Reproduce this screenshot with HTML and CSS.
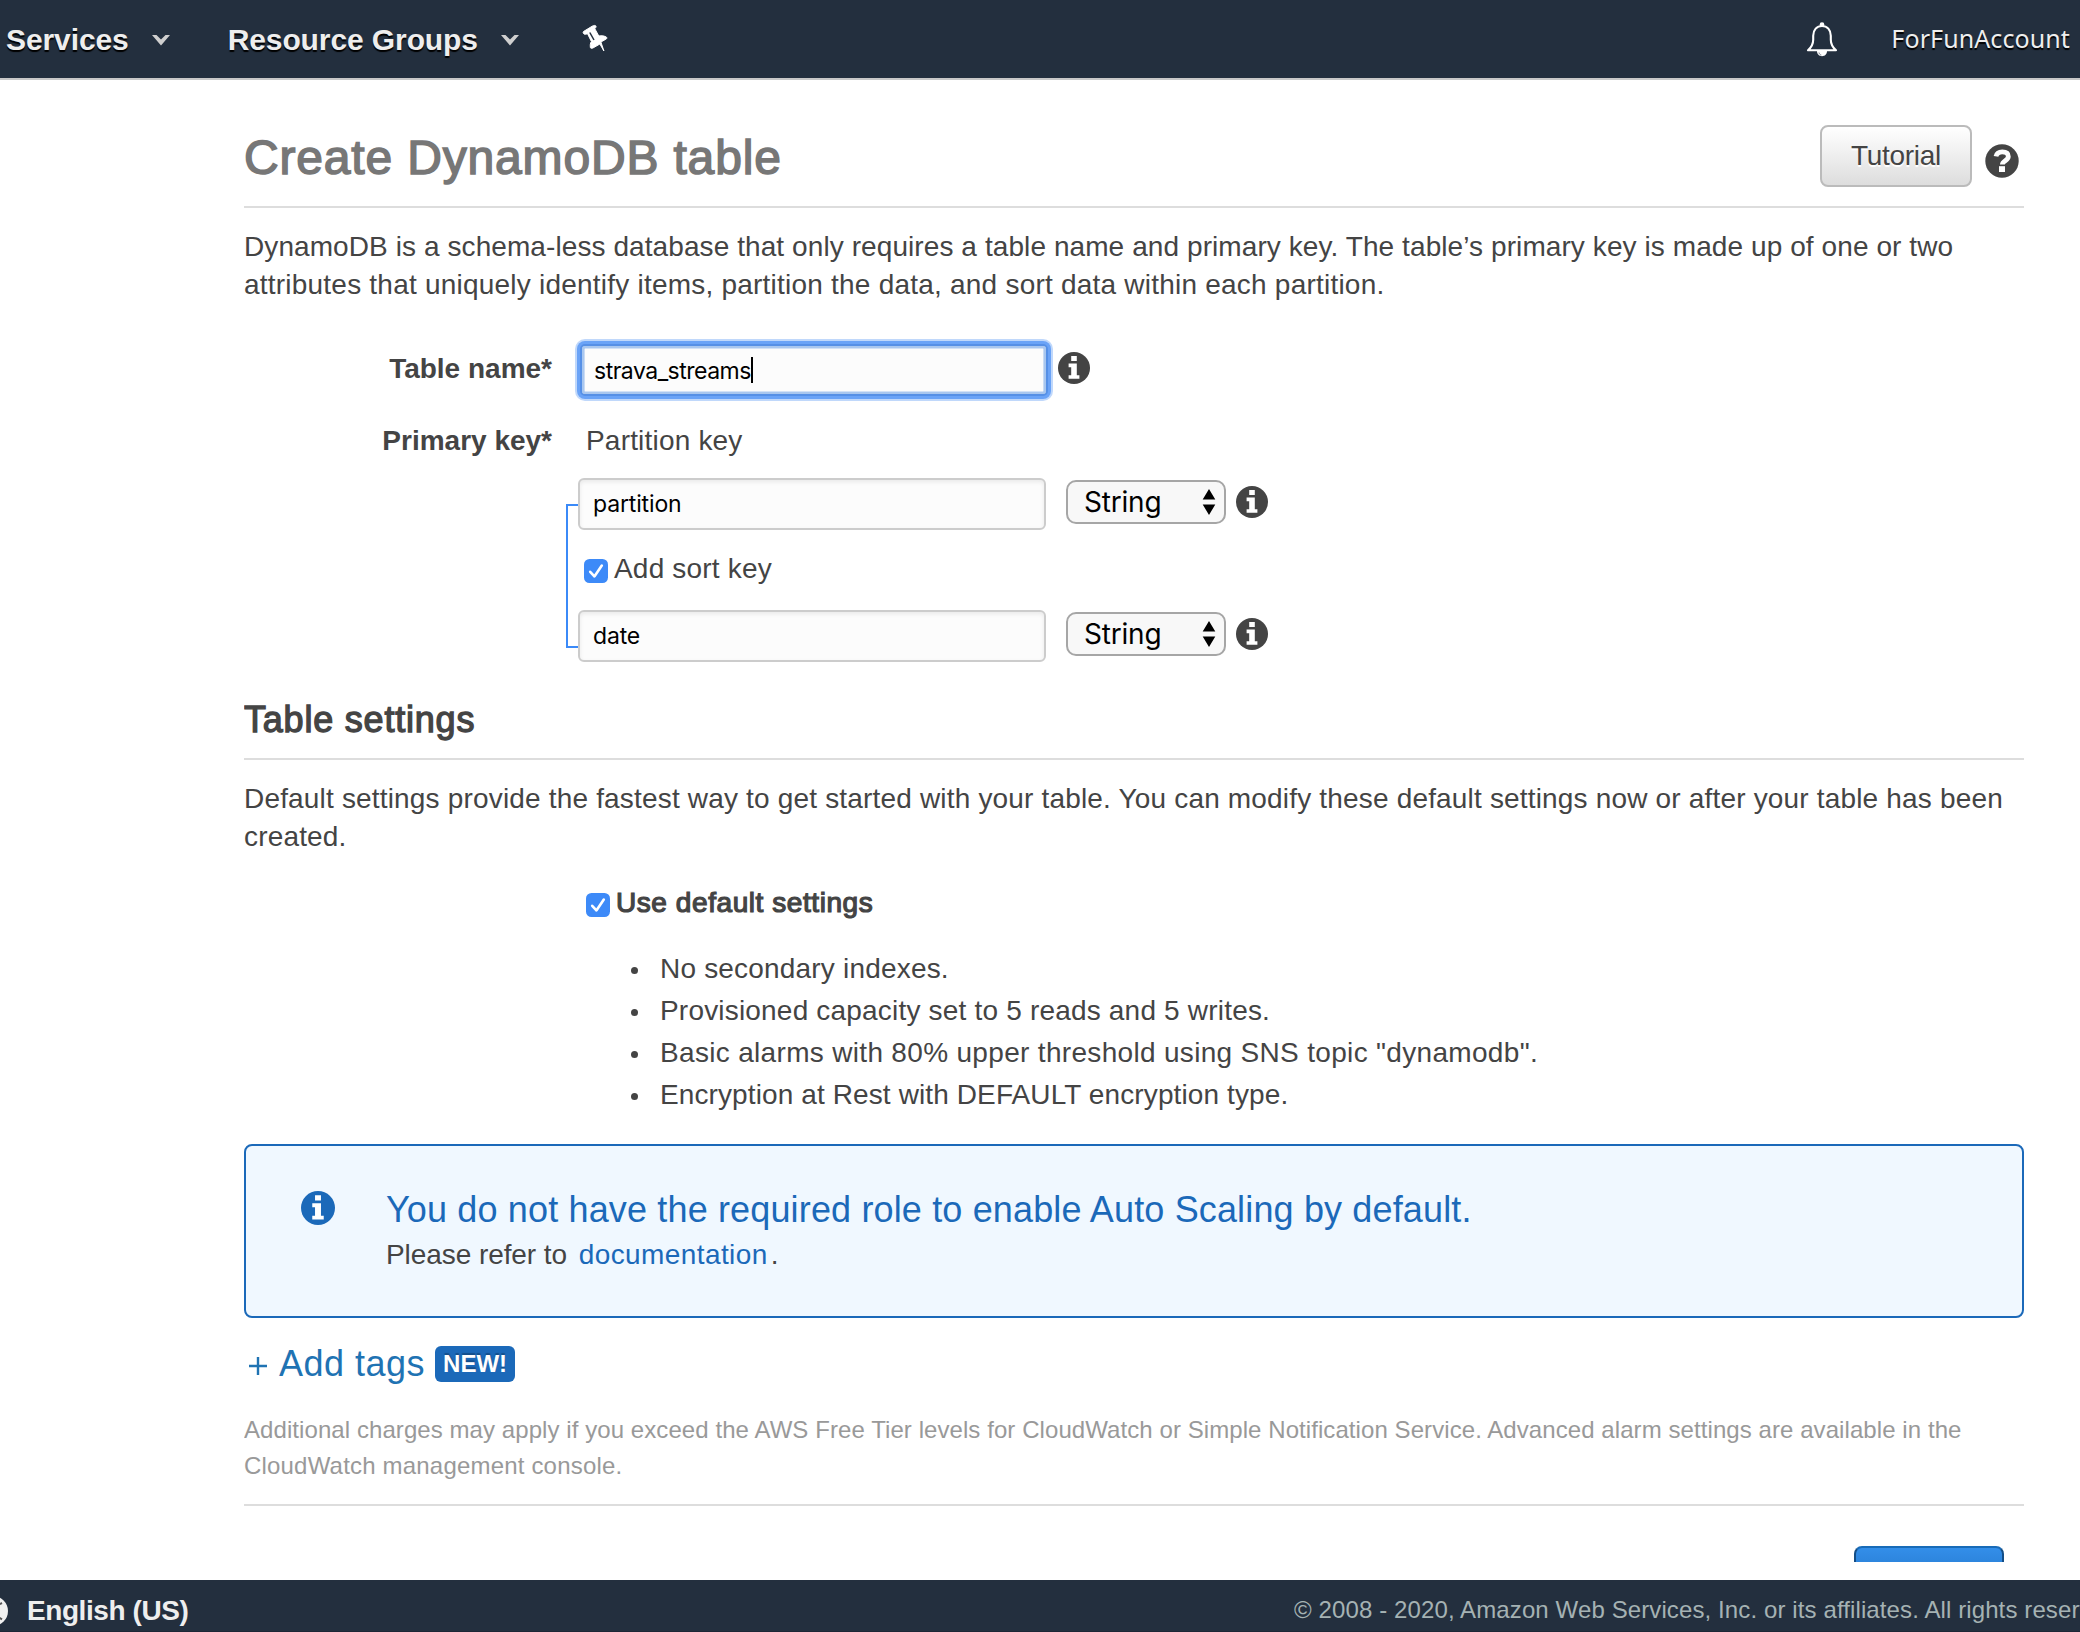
FILE: index.html
```html
<!DOCTYPE html>
<html lang="en">
<head>
<meta charset="utf-8">
<title>Create DynamoDB table</title>
<link rel="stylesheet" href="styles.css">
</head>
<body>
<svg class="defs" width="0" height="0" aria-hidden="true">
  <symbol id="info" viewBox="0 0 32 32">
    <circle cx="16" cy="16" r="16" fill="currentColor"/>
    <path fill="#fff" d="M13.2 4h5.6v5h-5.6zM10.6 11.6h8.2v11.6h2.6v3.6H10.6v-3.6h2.6v-8h-2.6z"/>
  </symbol>
  <symbol id="check" viewBox="0 0 24 24">
    <rect width="24" height="24" rx="5.5" fill="#3d8af8"/>
    <path d="M6.2 12.8l4.2 4.6L17.8 6.6" fill="none" stroke="#fff" stroke-width="2.6" stroke-linecap="round" stroke-linejoin="round"/>
  </symbol>
  <symbol id="caret" viewBox="0 0 18 11">
    <path d="M0 0h4.500L9 4.600 13.500 0H18L9 10.600z" fill="#cfcfcf"/>
  </symbol>
  <symbol id="updown" viewBox="0 0 14 28">
    <path d="M7 1l6.300 10.500H.7zM7 27L.7 16.500h12.600z" fill="#000"/>
  </symbol>
</svg>

<header class="topbar">
  <nav class="topnav">
    <a class="nav-item">Services</a>
    <svg class="caret" width="18" height="11"><use href="#caret"/></svg>
    <a class="nav-item nav-groups">Resource Groups</a>
    <svg class="caret" width="18" height="11"><use href="#caret"/></svg>
    <svg class="pin" width="26" height="29" viewBox="0 0 26 29">
      <path fill="#fff" stroke="#fff" stroke-width="1" stroke-linejoin="round" d="M1.500 7.500L10.500 2c1.500-.8 3.200-.8 3.500.2.300 1-.5 1.700-1.200 2.500l4 7.300c2.700-.5 5.700-.2 7.700 1.200.8.700.3 1.600-.6 2l-5 2.800 3 9-4-7-7 4c-1 .5-2.300.5-2.500-.500-.3-2.300-.2-4.500 1-6L5.500 9.700c-1.300.5-2.700.8-3.500.3s-1.200-1.800-.5-2.500z"/>
      <path d="M7.800 8.500l4.200 7.500" stroke="#232f3e" stroke-width="1.500"/>
    </svg>
  </nav>
  <div class="account">
    <svg class="bell" width="32" height="35" viewBox="0 0 32 35">
      <circle cx="16" cy="2.600" r="2.300" fill="#fff"/>
      <path d="M2 28.300h28c-4-3.500-5.200-6.500-5.200-10.500v-4c0-6-3.600-9.800-8.800-9.800s-8.800 3.800-8.800 9.800v4c0 4-1.200 7-5.200 10.500z" fill="none" stroke="#fff" stroke-width="2.100" stroke-linejoin="round"/>
      <path d="M11 29h10c0 3.200-2.200 5.200-5 5.200s-5-2-5-5.200z" fill="#fff"/>
      <path d="M13 30.500c.3 1.500 1 2.200 2.300 2.500" stroke="#5a6470" stroke-width=".8" fill="none"/>
    </svg>
    <span class="account-name">ForFunAccount</span>
  </div>
</header>

<main class="page">
  <div class="page-head">
    <h1>Create DynamoDB table</h1>
    <div class="head-actions">
      <button class="btn">Tutorial</button>
      <svg class="help" width="34" height="34" viewBox="0 0 34 34">
        <circle cx="17" cy="17" r="16.700" fill="#444"/>
        <path d="M11 12.400c.6-3.200 2.700-4.600 6.300-4.600 3.800 0 6 1.700 6 4.600 0 4.300-5.900 4.200-5.900 8.200" fill="none" stroke="#fff" stroke-width="4.800"/>
        <rect x="14" y="22.200" width="6" height="5.800" fill="#fff"/>
      </svg>
    </div>
  </div>
  <p class="intro"><span class="intro-a">DynamoDB is a schema-less database that only requires a table name and primary key. The table’s primary key is made up of one or two</span><br><span class="intro-b">attributes that uniquely identify items, partition the data, and sort data within each partition.</span></p>

  <form class="form">
    <div class="row">
      <label class="label label-name">Table name*</label>
      <div class="field focused"><span class="value-name">strava_streams</span><i class="cursor"></i></div>
      <svg class="info name-info" width="32" height="32"><use href="#info"/></svg>
    </div>
    <div class="row key-row">
      <label class="label">Primary key*</label>
      <div class="keys">
        <div class="hint">Partition key</div>
        <div class="key-group">
          <div class="key">
            <div class="field">partition</div>
            <div class="select"><span>String</span><svg width="14" height="28"><use href="#updown"/></svg></div>
            <svg class="info" width="32" height="32"><use href="#info"/></svg>
          </div>
          <div class="check sort-check"><svg width="24" height="24"><use href="#check"/></svg><span>Add sort key</span></div>
          <div class="key">
            <div class="field">date</div>
            <div class="select"><span>String</span><svg width="14" height="28"><use href="#updown"/></svg></div>
            <svg class="info" width="32" height="32"><use href="#info"/></svg>
          </div>
        </div>
      </div>
    </div>
  </form>

  <h2>Table settings</h2>
  <p class="settings-text">Default settings provide the fastest way to get started with your table. You can modify these default settings now or after your table has been<br>created.</p>
  <div class="check default-check"><svg width="24" height="24"><use href="#check"/></svg><span class="medium">Use default settings</span></div>
  <ul class="defaults">
    <li>No secondary indexes.</li>
    <li>Provisioned capacity set to 5 reads and 5 writes.</li>
    <li class="alarms">Basic alarms with 80% upper threshold using SNS topic "dynamodb".</li>
    <li class="encryption">Encryption at Rest with DEFAULT encryption type.</li>
  </ul>

  <section class="alert">
    <svg class="alert-icon" width="34" height="34"><use href="#info"/></svg>
    <div>
      <div class="alert-title">You do not have the required role to enable Auto Scaling by default.</div>
      <div class="alert-text">Please refer to <a class="doc-link">documentation</a>.</div>
    </div>
  </section>

  <div class="tags"><svg class="plus" width="18" height="18" viewBox="0 0 18 18"><path d="M9 0v18M0 9h18" stroke="#1f73b3" stroke-width="2.400"/></svg><a>Add tags</a><span class="badge">NEW!</span></div>
  <p class="note"><span class="note-a">Additional charges may apply if you exceed the AWS Free Tier levels for CloudWatch or Simple Notification Service. Advanced alarm settings are available in the</span><br>CloudWatch management console.</p>
  <div class="actions"><span class="primary"></span></div>
</main>

<footer class="footer">
  <div class="language">
    <svg width="8" height="30" viewBox="0 0 8 30">
      <circle cx="-7" cy="15" r="15" fill="#f0f0f0"/>
      <path d="M-1 8.500l3-1.500M-1 21.500l3 1.800" stroke="#555" stroke-width="2"/>
    </svg>
    <span>English (US)</span>
  </div>
  <div class="copyright">© 2008 - 2020, Amazon Web Services, Inc. or its affiliates. All rights reserved.</div>
</footer>
</body>
</html>
```
FILE: styles.css
```css
*, *::before { box-sizing: border-box; }

body {
  margin: 0;
  width: 2080px;
  height: 1632px;
  overflow: hidden;
  display: flex;
  flex-direction: column;
  background: #fff;
  color: #444;
  font: 28px/38px "Liberation Sans", Arial, sans-serif;
  letter-spacing: 0.19px;
}

h1, h2, p, ul { margin: 0; padding: 0; }
svg { display: block; flex: none; }
.defs { position: absolute; }

/* Top bar */
.topbar {
  height: 80px;
  flex: none;
  display: flex;
  justify-content: space-between;
  align-items: center;
  background: #232f3e;
  border-bottom: 2px solid #c8c8c8;
  color: #eee;
  padding: 0 10px 0 6px;
}
.topnav, .account { display: flex; align-items: center; }
.nav-item {
  padding-top: 1px;
  font-weight: bold;
  font-size: 30px;
  letter-spacing: -0.1px;
  text-shadow: 0 2px 1px #000;
}
.topnav .caret { margin: 3px 58px 0 23px; }
.topnav .nav-groups + .caret { margin-right: 63px; }
.pin { margin-top: -2px; }
.bell { margin-right: 53px; }
.account-name {
  padding-bottom: 2px;
  font: 25px/38px "Noto Sans", sans-serif;
  letter-spacing: 0.1px;
  text-shadow: 0 2px 1px #000;
}

/* Page */
.page {
  height: 1482px;
  flex: none;
  margin: 0 56px 18px 244px;
  overflow: hidden;
}
.page-head {
  height: 128px;
  display: flex;
  justify-content: space-between;
  padding-top: 45px;
  border-bottom: 2px solid #ddd;
}
h1 {
  margin-top: 3px;
  font-size: 48px;
  line-height: 60px;
  font-weight: normal;
  letter-spacing: 0.83px;
  color: #777;
  -webkit-text-stroke: 1.5px #777;
}
.head-actions { display: flex; padding-right: 5px; }
.btn {
  width: 152px;
  height: 62px;
  margin-right: 13px;
  padding: 0 0 1px;
  border: 2px solid #bbb;
  border-radius: 8px;
  background: linear-gradient(#fff, #ddd);
  color: #444;
  font: inherit;
  letter-spacing: -0.3px;
  text-shadow: 0 2px 1px #fff;
}
.help { margin-top: 19px; }
.intro { margin-top: 20px; white-space: nowrap; }
.intro-a { letter-spacing: 0.085px; }
.intro-b { letter-spacing: 0.22px; }

/* Form */
.form { margin-top: 40px; }
.row { display: flex; align-items: flex-start; }
.label {
  width: 308px;
  margin-right: 28px;
  padding-top: 6px;
  text-align: right;
  font-weight: bold;
  letter-spacing: 0;
}
.field {
  width: 468px;
  height: 52px;
  padding-left: 13px;
  display: flex;
  align-items: center;
  border: 2px solid #ccc;
  border-radius: 6px;
  background: #fcfcfc;
  box-shadow: inset 0 2px 4px rgba(0, 0, 0, 0.08);
  color: #000;
  font: 23px/38px Inter, sans-serif;
  letter-spacing: -0.15px;
}
.focused {
  padding-left: 12px;
  border-color: #5690e6;
  border-radius: 5px;
  box-shadow: inset 0 0 0 2.600px #a9c7ef, 0 0 0 3px #6aa3f7, 0 0 0 5px #c0d8fb;
}
.value-name { letter-spacing: -0.5px; padding-top: 1px; }
.cursor { width: 2px; height: 26px; margin: -1px 0 0 0; background: #000; }
.info { color: #444; margin: 8px 0 0 10px; }
.key-row { margin-top: 25px; }
.key-row .label { padding-top: 1px; margin-right: 26px; }
.hint { padding: 1px 0 0 8px; }
.key-group { position: relative; margin-top: 18px; }
.key-group::before {
  content: "";
  position: absolute;
  left: -12px;
  top: 26px;
  width: 12px;
  height: 144px;
  border: 2px solid #3b8af8;
  border-right: 0;
}
.key { display: flex; }
.select {
  width: 160px;
  height: 44px;
  margin: 2px 0 0 20px;
  padding: 0 8px 0 16px;
  display: flex;
  justify-content: space-between;
  align-items: center;
  border: 2px solid #a6a6a6;
  border-radius: 10px;
  background: #f8f8f8;
  color: #000;
  font: 28px/38px Inter, sans-serif;
  letter-spacing: -0.2px;
}
.check { display: flex; align-items: center; }
.check svg { margin: 3px 6px 0 0; }
.sort-check { padding-left: 6px; margin: 20px 0 22px; }

/* Settings */
h2 {
  height: 63px;
  margin-top: 35px;
  border-bottom: 2px solid #ddd;
  font-size: 36px;
  line-height: 46px;
  font-weight: normal;
  letter-spacing: 0.79px;
  -webkit-text-stroke: 1.3px #444;
}
.settings-text { margin-top: 20px; letter-spacing: 0.175px; white-space: nowrap; }
.default-check { margin-top: 28px; padding-left: 342px; }
.medium { letter-spacing: 0.57px; -webkit-text-stroke: 1.2px #444; }
.defaults { margin: 26px 0 0 416px; list-style: none; line-height: 42px; }
.defaults li { display: flex; align-items: center; }
.defaults li::before {
  content: "";
  width: 7px;
  height: 7px;
  margin: 3px 22px 0 -29px;
  border-radius: 50%;
  background: #444;
}
.alarms { letter-spacing: 0.32px; }
.encryption { letter-spacing: 0.11px; }

.alert {
  height: 174px;
  margin-top: 28px;
  padding: 41px 0 0 55px;
  display: flex;
  border: 2px solid #1b69b9;
  border-radius: 8px;
  background: #f0f8ff;
}
.alert-icon { color: #1b69b9; margin: 4px 51px 0 0; }
.alert-title { font-size: 36px; line-height: 46px; letter-spacing: 0.15px; color: #1b69b9; }
.alert-text { margin-top: 3px; letter-spacing: -0.07px; }
.doc-link { color: #1b69b9; letter-spacing: 0.4px; margin: 0 3px 0 4px; }

.tags {
  margin-top: 23px;
  padding-left: 5px;
  display: flex;
  color: #1f73b3;
  font-size: 36px;
  line-height: 46px;
  letter-spacing: 0.5px;
}
.plus { margin: 16px 12px 0 0; }
.badge {
  width: 80px;
  height: 36px;
  margin: 5px 0 0 10px;
  border-radius: 6px;
  background: #1b69b9;
  color: #fff;
  text-align: center;
  font-size: 24px;
  font-weight: bold;
  line-height: 36px;
  letter-spacing: 0;
  text-shadow: 0 -2px 1px rgba(0, 0, 0, 0.25);
}
.note {
  margin-top: 25px;
  padding-bottom: 20px;
  border-bottom: 2px solid #ddd;
  color: #999;
  font-size: 24px;
  line-height: 36px;
  white-space: nowrap;
}
.note-a { letter-spacing: 0.074px; }
.actions { display: flex; justify-content: flex-end; padding: 40px 20px 0 0; }
.primary {
  width: 150px;
  height: 62px;
  border: 2px solid #134d86;
  border-top-color: #186bb8;
  border-radius: 8px;
  background: linear-gradient(#338ee9, #1b69b9);
}

/* Footer */
.footer {
  height: 52px;
  flex: none;
  display: flex;
  justify-content: space-between;
  background: #232f3e;
  border-bottom: 1px solid #1d2636;
  color: #eee;
}
.language { display: flex; padding-top: 12px; font-weight: bold; letter-spacing: -0.42px; }
.language svg { margin: 4px 19px 0 0; }
.copyright {
  width: 786px;
  padding-top: 11px;
  overflow: hidden;
  white-space: nowrap;
  color: #a5b2b3;
  font-size: 24px;
  letter-spacing: 0.11px;
}
```
